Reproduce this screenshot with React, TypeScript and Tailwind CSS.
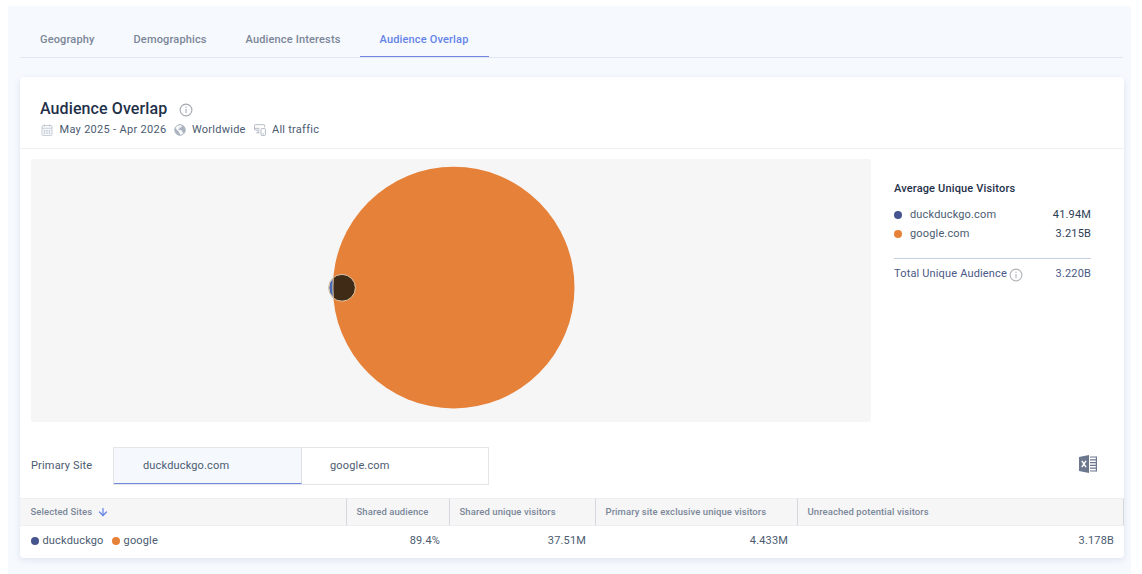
import React from "react";
import { ArrowDown } from "lucide-react";

const tabs = [
  { label: "Geography", className: "w-[93.5px]" },
  { label: "Demographics", className: "w-[112px]" },
  { label: "Audience Interests", className: "w-[134px]" },
];

const sites = [
  { name: "duckduckgo", domain: "duckduckgo.com", visitors: "41.94M", dot: "bg-[#465490]" },
  { name: "google", domain: "google.com", visitors: "3.215B", dot: "bg-[#e68139]" },
];

const columns = [
  { title: "Shared audience", value: "89.4%" },
  { title: "Shared unique visitors", value: "37.51M" },
  { title: "Primary site exclusive unique visitors", value: "4.433M" },
  { title: "Unreached potential visitors", value: "3.178B" },
];

const InfoIcon = ({ className }: { className: string }) => (
  <svg className={className} viewBox="0 0 14 14" fill="none" stroke="currentColor" strokeWidth="1.1">
    <circle cx="7" cy="7" r="5.9" />
    <path d="M7 6.1v4" />
    <path d="M7 3.8v1.2" />
  </svg>
);

const CalendarIcon = () => (
  <svg className="h-3 w-3" viewBox="0 0 12 12" fill="none" stroke="#b4bdc9" strokeWidth="0.8">
    <rect x="1" y="1.6" width="10" height="9.8" rx="1" />
    <path d="M1 4.2h10M3.4 0.4v2M8.6 0.4v2" />
    <path d="M3.5 5.5v4.6M6 5.5v4.6M8.5 5.5v4.6M2.2 6.8h7.6M2.2 9h7.6" strokeWidth="0.55" />
  </svg>
);

const GlobeIcon = () => (
  <svg className="h-3 w-3" viewBox="0 0 12 12">
    <circle cx="6" cy="6" r="5.3" fill="#f6f8fa" stroke="#a3adb9" strokeWidth="0.9" />
    <path
      d="M1 4 L4.6 7.4 4.8 8.6 6 9.6 V11.2 C2.4 11 0.5 7.8 1 4Z M4.4 1 C7 0.4 9.2 1.2 10.5 3.2 C11.6 5.4 11.3 7.6 9.9 9.3 L9 8.6 8.2 8.4 V6.4 L4.4 5.8 V4.8 H5.6 V3.4 H7 L8 2.2 V1.2Z"
      fill="#a9b2be"
    />
  </svg>
);

const DevicesIcon = () => (
  <svg className="h-3 w-3" viewBox="0 0 12 12" fill="none" stroke="#abb4c0" strokeWidth="0.9">
    <path d="M10.6 3.4V1.4a.7.7 0 0 0-.7-.7H1.2a.7.7 0 0 0-.7.7v4a.7.7 0 0 0 .7.7h4.3M.6 4.3h4.9" />
    <path d="M4.2 6.2v2.5M2.2 8.8h3.4" />
    <rect x="7" y="4.6" width="4.4" height="6.9" rx="0.7" />
    <path d="M8.4 9.8h1.6" />
  </svg>
);

const ExcelIcon = () => (
  <svg className="h-[18px] w-[18px]" viewBox="0 0 18 18">
    <path d="M0 2 10 0v18L0 16Z" fill="#6b788e" />
    <path d="M2.8 5.8 7 12.2M7 5.8 2.8 12.2" stroke="#fff" strokeWidth="1.5" />
    <path
      d="M11 2h6.4v14H11M11 4.8h6.4M11 7.6h6.4M11 10.4h6.4M11 13.2h6.4"
      fill="none"
      stroke="#6b788e"
      strokeWidth="1.2"
    />
  </svg>
);

const OverlapChart = () => (
  <svg className="h-full w-full" viewBox="0 0 840 263">
    <circle cx="311" cy="128.8" r="13.2" fill="#4b69b0" stroke="#d8d5cf" strokeWidth="1" />
    <circle cx="422.7" cy="128.6" r="120.8" fill="#e68139" />
    <clipPath id="google">
      <circle cx="422.7" cy="128.6" r="120.8" />
    </clipPath>
    <circle cx="311" cy="128.8" r="13.2" fill="#402b17" clipPath="url(#google)" />
    <circle cx="311" cy="128.8" r="13.4" fill="none" stroke="#d9c4a8" strokeWidth="1" />
    <path d="M302.3 118.5A120.8 120.8 0 0 0 302.3 139" fill="none" stroke="#cbb9a6" strokeWidth="1.2" />
  </svg>
);

const App = () => {
  return (
    <div className="h-[574px] overflow-hidden bg-white pt-1.5 pr-[11px] pl-2 font-['Roboto',sans-serif] text-[11px] tracking-[0.16px] text-[#4b5b70]">
      <div className="h-full bg-[#f6f9fe] pr-2 pl-3">
        <nav className="flex h-[52px] border-b border-[#e2e8f1] pl-5 font-medium text-[#7b8697]">
          {tabs.map((tab) => (
            <span key={tab.label} className={`${tab.className} pt-[27px] leading-[14px] whitespace-nowrap`}>
              {tab.label}
            </span>
          ))}
          <span className="-ml-5 h-[51px] w-[129px] border-b border-[#7185e0] pt-[27px] text-center leading-[14px] text-[#6584e8]">
            Audience Overlap
          </span>
        </nav>

        <main className="mt-[19px] h-[481px] w-[1104px] rounded bg-white shadow-[0_2px_6px_rgba(30,50,90,0.11)]">
          <header className="h-[72px] border-b border-[#edeff2] pt-[21px] pl-5">
            <div className="flex items-center">
              <h1 className="w-[139px] text-base leading-[22px] font-medium tracking-[0.1px] text-[#1f3149]">
                Audience Overlap
              </h1>
              <InfoIcon className="mt-0.5 h-3.5 w-3.5 text-[#a2a8b0]" />
            </div>
            <div className="mt-[3px] flex items-center pl-px leading-[14px] tracking-[0.25px]">
              <CalendarIcon />
              <span className="ml-[6.5px] w-[114px] whitespace-nowrap tracking-[0.3px]">May 2025 - Apr 2026</span>
              <GlobeIcon />
              <span className="ml-[6.5px] w-[62px]">Worldwide</span>
              <DevicesIcon />
              <span className="ml-1.5">All traffic</span>
            </div>
          </header>

          <section className="flex pt-2.5 pl-[11px]">
            <div className="h-[263px] w-[840px] rounded-xs bg-[#f6f6f6]">
              <OverlapChart />
            </div>
            <aside className="ml-[23px] w-[197px] pt-[22px]">
              <h2 className="leading-4 font-medium text-[#1f3149]">Average Unique Visitors</h2>
              <ul className="mt-[9px] border-b border-[#c5d1de] pb-3.5">
                {sites.map((site) => (
                  <li key={site.domain} className="flex h-[19px] items-center">
                    <span className={`mr-2 mb-px h-2 w-2 rounded-full ${site.dot}`} />
                    <span>{site.domain}</span>
                    <span className="ml-auto text-[#2c3e55]">{site.visitors}</span>
                  </li>
                ))}
              </ul>
              <div className="mt-[7px] flex h-4 items-center text-[#4a5887]">
                <span>Total Unique Audience</span>
                <InfoIcon className="mt-px ml-0.5 h-3.5 w-3.5 text-[#b0b3b8]" />
                <span className="ml-auto">3.220B</span>
              </div>
            </aside>
          </section>

          <section className="flex h-[76px] items-start pt-[25px] pl-[11px]">
            <span className="mt-3 w-[82px] leading-[14px]">Primary Site</span>
            <div className="flex h-[38px] w-[376px] border border-[#e3e6e9] leading-[36px]">
              <div className="h-[36px] w-[188px] border-r border-b border-r-[#dce1e7] border-b-[#7188dd] bg-[#f5f9fe] pl-[29px]">
                duckduckgo.com
              </div>
              <div className="pl-7">google.com</div>
            </div>
            <div className="mt-2 ml-[590px]">
              <ExcelIcon />
            </div>
          </section>

          <table className="w-[1104px] table-fixed border-separate border-spacing-0">
            <colgroup>
              <col className="w-[327px]" />
              <col className="w-[103px]" />
              <col className="w-[146px]" />
              <col className="w-[202px]" />
              <col className="w-[326px]" />
            </colgroup>
            <thead>
              <tr className="h-7 bg-[#f6f6f7] text-left text-[9.5px] tracking-[0.08px] text-[#7b8798]">
                <th className="border-y border-r border-y-[#eceef1] border-r-[#d5d9df] pl-[10.5px] font-medium">
                  <span className="flex items-center">
                    Selected Sites
                    <ArrowDown className="ml-[5px] h-3 w-3 text-[#6584e8]" strokeWidth={2.5} />
                  </span>
                </th>
                {columns.map((column) => (
                  <th
                    key={column.title}
                    className="border-y border-r border-y-[#eceef1] border-r-[#d5d9df] pt-px pl-[9.5px] font-medium whitespace-nowrap"
                  >
                    {column.title}
                  </th>
                ))}
              </tr>
            </thead>
            <tbody>
              <tr className="h-[29px]">
                <td className="pt-px pl-[10.5px]">
                  <div className="flex items-center">
                    {sites.map((site) => (
                      <span key={site.name} className="mr-2 flex items-center">
                        <span className={`mr-1 h-2 w-2 rounded-full ${site.dot}`} />
                        {site.name}
                      </span>
                    ))}
                  </div>
                </td>
                {columns.map((column) => (
                  <td key={column.title} className="pt-px pr-2.5 text-right">
                    {column.value}
                  </td>
                ))}
              </tr>
            </tbody>
          </table>
        </main>
      </div>
    </div>
  );
};

export default App;
